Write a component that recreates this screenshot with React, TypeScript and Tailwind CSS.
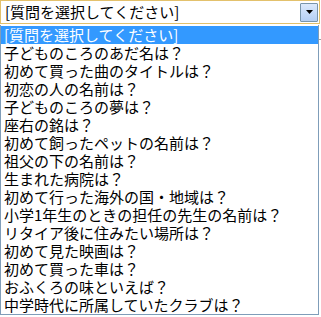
const items = [
  "[質問を選択してください]",
  "子どものころのあだ名は？",
  "初めて買った曲のタイトルは？",
  "初恋の人の名前は？",
  "子どものころの夢は？",
  "座右の銘は？",
  "初めて飼ったペットの名前は？",
  "祖父の下の名前は？",
  "生まれた病院は？",
  "初めて行った海外の国・地域は？",
  "小学1年生のときの担任の先生の名前は？",
  "リタイア後に住みたい場所は？",
  "初めて見た映画は？",
  "初めて買った車は？",
  "おふくろの味といえば？",
  "中学時代に所属していたクラブは？",
];

export default function App() {
  const selected = 0;

  return (
    <div
      className="w-[321px] h-[317px] bg-white text-black overflow-hidden"
      style={{ fontFamily: '"Noto Sans CJK JP", "Noto Sans", sans-serif' }}
    >
      <div className="w-[320px] h-[24px] border border-[#e3c16c] flex items-center justify-between pl-[4px] pr-[1px] text-[15px] leading-[18px]">
        <span>[質問を選択してください]</span>
        <div className="w-[18px] h-[19px] border border-[#7895ab] rounded-[1px] bg-gradient-to-b from-[#dbe9fd] to-[#b4cff4] flex items-center justify-center">
          <svg width="7" height="4" viewBox="0 0 7 4">
            <path d="M0 0h7L3.5 4z" fill="#000" />
          </svg>
        </div>
      </div>
      <div className="flex">
        <ul className="w-[319px] mt-[1px] pt-[1px] border-x border-b border-[#7f9db9] text-[15px] leading-[18px]">
          {items.map((q, i) => (
            <li
              key={q}
              className={
                i === selected
                  ? "h-[18px] pl-[3px] bg-[#3399ff] text-white whitespace-nowrap"
                  : "h-[18px] pl-[3px] whitespace-nowrap"
              }
            >
              {q}
            </li>
          ))}
        </ul>
        <div className="flex-1 mt-[15px] h-px bg-[#a0a0a0]" />
      </div>
    </div>
  );
}
